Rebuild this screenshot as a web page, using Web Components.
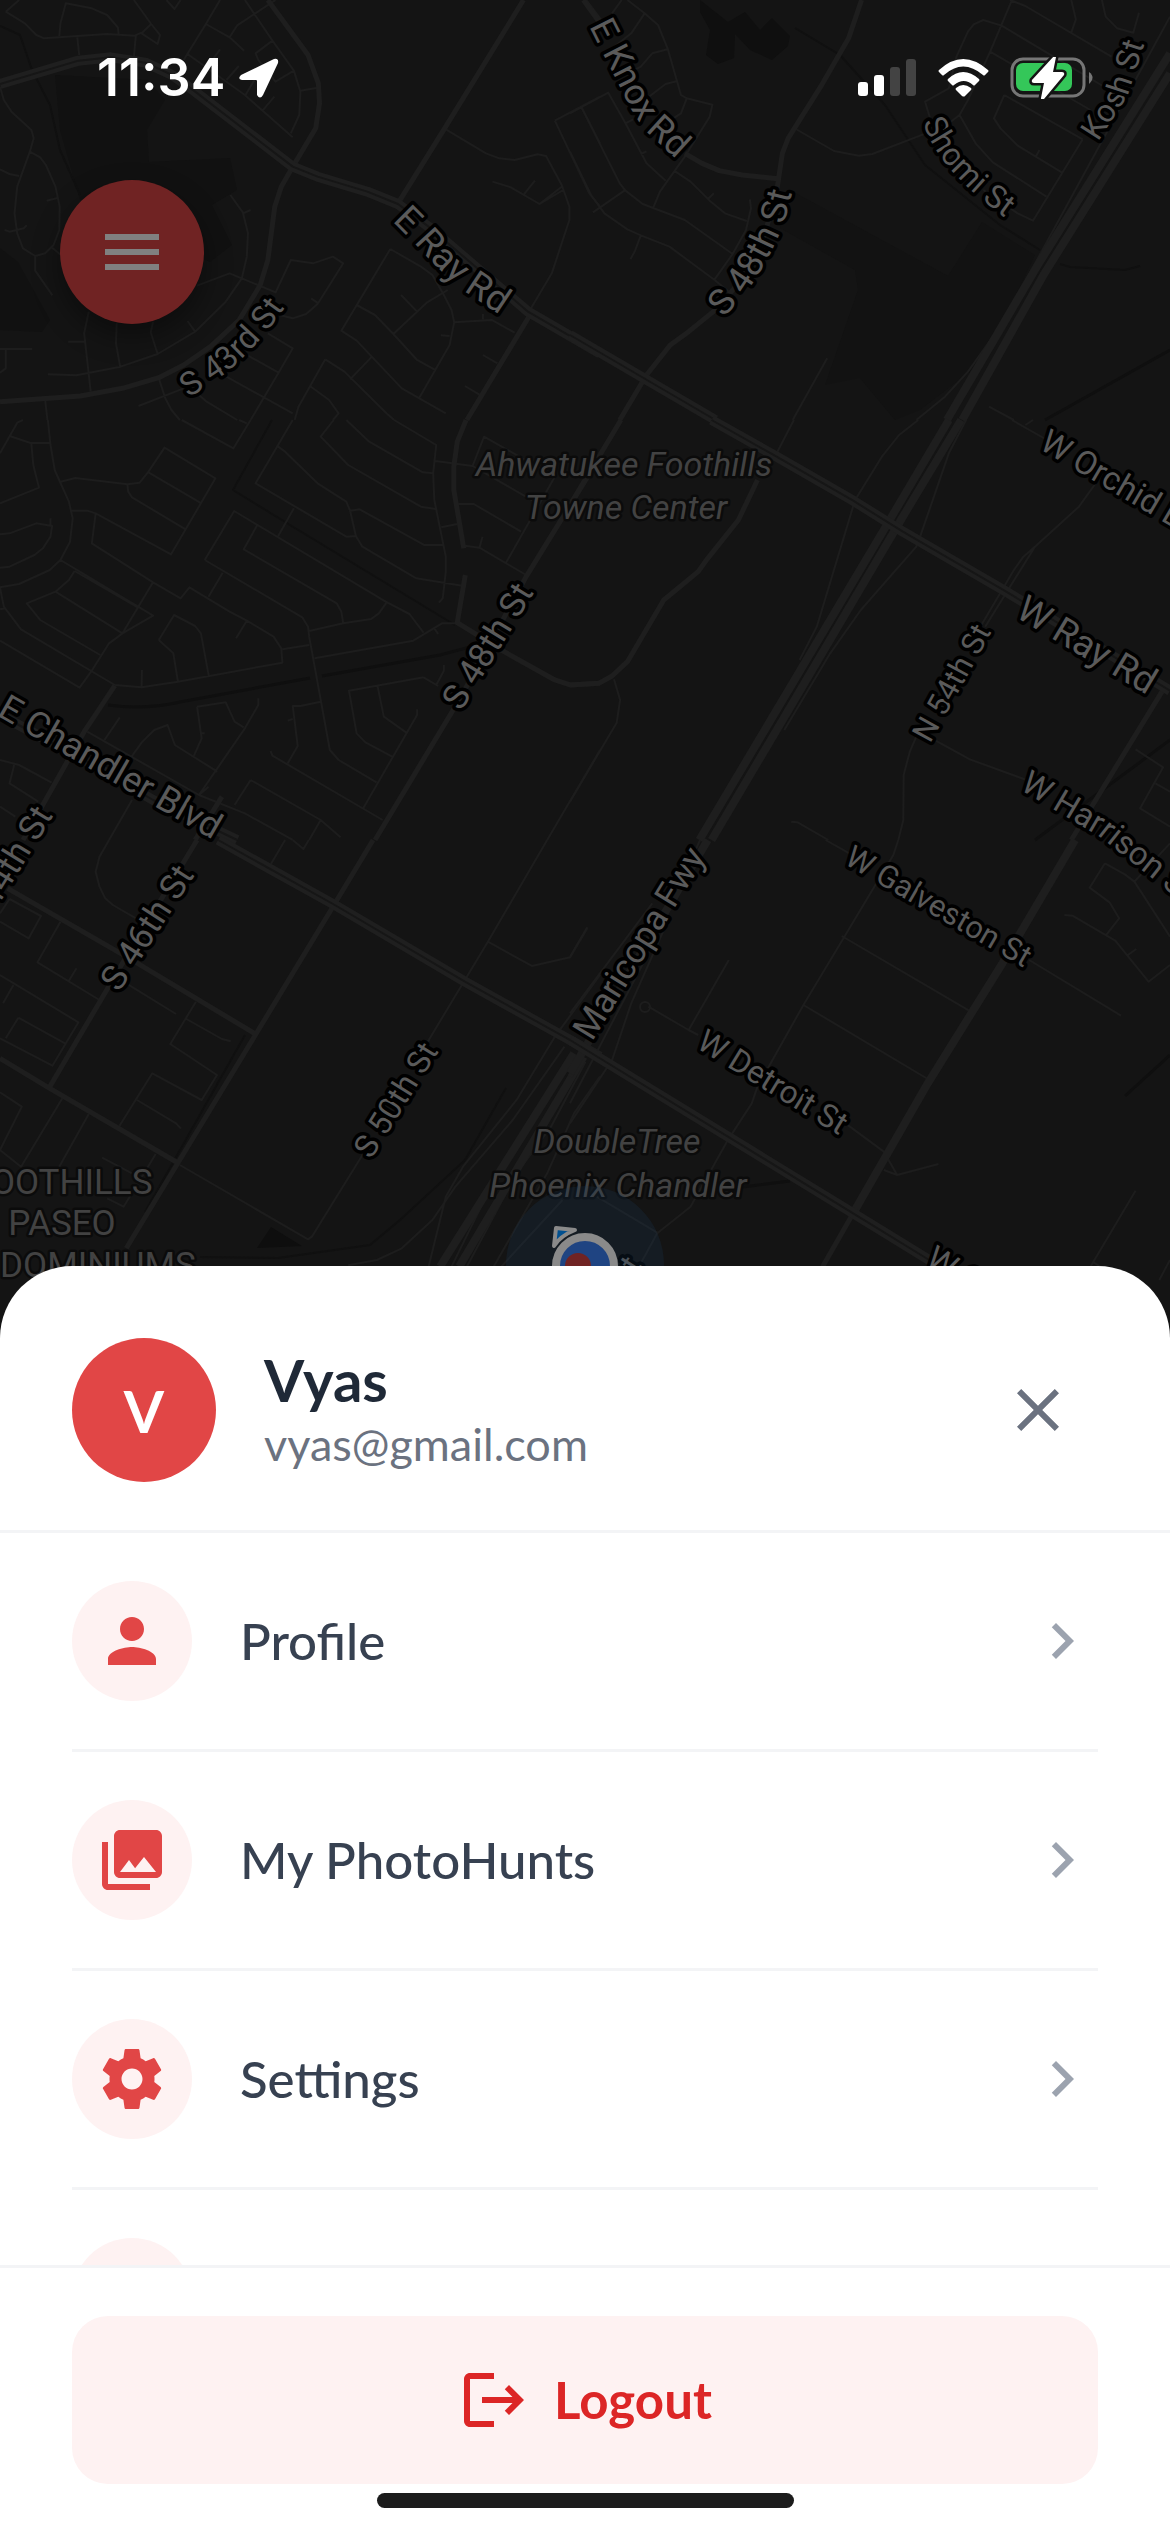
<!DOCTYPE html>
<html lang="en">
<head>
<meta charset="utf-8">
<meta name="viewport" content="width=device-width, initial-scale=1">
<title>PhotoHunts menu</title>
<style>
  html, body { margin: 0; height: 100%; }
  body { background: #141414; font-family: Lato, "Open Sans", sans-serif; -webkit-font-smoothing: antialiased; }
</style>
</head>
<body>
<app-screen>
  <street-map slot="map"></street-map>
  <status-bar slot="top" time="11:34"></status-bar>
  <menu-fab slot="top"></menu-fab>
  <menu-sheet slot="sheet">
    <user-header slot="header" initial="V">
      <span slot="name">Vyas</span>
      <span slot="email">vyas@gmail.com</span>
    </user-header>
    <menu-row icon="person">Profile</menu-row>
    <menu-row icon="photos">My PhotoHunts</menu-row>
    <menu-row icon="gear">Settings</menu-row>
    <menu-row icon="none"></menu-row>
    <logout-button slot="footer">Logout</logout-button>
  </menu-sheet>
</app-screen>

<script>
const define = (name, render) => customElements.define(name, class extends HTMLElement {
  connectedCallback() {
    if (this.shadowRoot) return;
    this.attachShadow({ mode: 'open' }).innerHTML = render(this);
  }
});

const ICONS = {
  none: '',
  person: 'M12 12c2.21 0 4-1.79 4-4s-1.79-4-4-4-4 1.79-4 4 1.79 4 4 4zm0 2c-2.67 0-8 1.34-8 4v2h16v-2c0-2.66-5.33-4-8-4z',
  photos: 'M22 16V4c0-1.1-.9-2-2-2H8c-1.1 0-2 .9-2 2v12c0 1.1.9 2 2 2h12c1.1 0 2-.9 2-2zm-11-4l2.03 2.71L16 11l4 5H8l3-4zM2 6v14c0 1.1.9 2 2 2h14v-2H4V6H2z',
  gear: 'M19.43 12.98c.04-.32.07-.64.07-.98s-.03-.66-.07-.98l2.11-1.65c.19-.15.24-.42.12-.64l-2-3.46c-.12-.22-.39-.3-.61-.22l-2.49 1c-.52-.4-1.08-.73-1.69-.98l-.38-2.65C14.46 2.18 14.25 2 14 2h-4c-.25 0-.46.18-.49.42l-.38 2.65c-.61.25-1.17.59-1.69.98l-2.49-1c-.23-.09-.49 0-.61.22l-2 3.46c-.13.22-.07.49.12.64l2.11 1.65c-.04.32-.07.65-.07.98s.03.66.07.98l-2.11 1.65c-.19.15-.24.42-.12.64l2 3.46c.12.22.39.3.61.22l2.49-1c.52.4 1.08.73 1.69.98l.38 2.65c.03.24.24.42.49.42h4c.25 0 .46-.18.49-.42l.38-2.65c.61-.25 1.17-.59 1.69-.98l2.49 1c.23.09.49 0 .61-.22l2-3.46c.12-.22.07-.49-.12-.64l-2.11-1.65zM12 15.5c-1.93 0-3.5-1.57-3.5-3.5s1.57-3.5 3.5-3.5 3.5 1.57 3.5 3.5-1.57 3.5-3.5 3.5z',
  close: 'M19 6.41L17.59 5 12 10.59 6.41 5 5 6.41 10.59 12 5 17.59 6.41 19 12 13.41 17.59 19 19 17.59 13.41 12z',
  chevron: 'M10 6L8.59 7.41 13.17 12l-4.58 4.59L10 18l6-6z',
  menu: 'M3 18h18v-2H3v2zm0-5h18v-2H3v2zm0-7v2h18V6H3z',
  logout: 'M17 7l-1.41 1.41L18.17 11H8v2h10.17l-2.58 2.58L17 17l5-5zM4 5h8V3H4c-1.1 0-2 .9-2 2v14c0 1.1.9 2 2 2h8v-2H4V5z'
};
const icon = name => `<svg viewBox="0 0 24 24" width="72" height="72" fill="currentColor" aria-hidden="true"><path d="${ICONS[name]}"/></svg>`;
const RESET = 'button{appearance:none;border:0;margin:0;padding:0;background:none;font:inherit;color:inherit;cursor:pointer}svg{display:block;flex:none}';

define('app-screen', () => `
<style>
  :host { display: grid; min-height: 100vh; grid-template: minmax(0, 1fr) / minmax(0, 1fr); overflow: hidden; }
  .map, .ui { grid-area: 1 / 1; }
  .map { display: grid; height: 100vh; }
  .ui { display: flex; flex-direction: column; justify-content: space-between; z-index: 1; }
</style>
<div class="map"><slot name="map"></slot></div>
<div class="ui"><div><slot name="top"></slot></div><slot name="sheet"></slot></div>`);

define('status-bar', el => `
<style>
  :host { display: flex; justify-content: space-between; align-items: center; height: 156px; padding: 0 76px 0 97px; color: #fff; }
  .left { display: flex; align-items: center; gap: 14px; font: 600 52px/60px Inter, sans-serif; }
  .right { display: flex; align-items: center; gap: 21px; }
  svg { display: block; }
</style>
<div class="left"><span>${el.getAttribute('time')}</span>
  <svg width="40" height="40" viewBox="0 0 40 40" fill="#fff"><path d="M2 17 35 1q5-1 4 4L24 37q-3 5-6 0V23q0-1-1-1H3q-5-1-1-5z"/></svg></div>
<div class="right">
  <svg width="59" height="38" viewBox="0 0 59 38" fill="#fff"><rect y="23" width="10" height="14" rx="3"/><rect x="16" y="16" width="10" height="21" rx="3"/><g fill="#434343"><rect x="32" y="8" width="10" height="29" rx="3"/><rect x="48" width="10" height="37" rx="3"/></g></svg>
  <svg width="51" height="38" viewBox="0 0 51 38" fill="#fff"><path d="M1 11Q25 -11 50 11q1 1 0 2l-3 3q-1 1-2 0Q25-1 6 16q-1 1-2 0l-3-3q-1-1 0-2z"/><path d="M10 20Q25 6 41 20q1 1 0 2l-4 4q-1 1-2 0-9-8-19 0-1 1-2 0l-4-4q-1-1 0-2z"/><path d="M18 29q7-6 15 0 1 1 0 2l-6 6q-1 1-3 0l-6-6q-1-1 0-2z"/></svg>
  <svg width="84" height="42" viewBox="0 0 84 42"><rect x="2" y="2" width="72" height="37" rx="11" fill="none" stroke="#767676" stroke-width="3"/><rect x="6" y="6" width="56" height="28" rx="7" fill="#34c759"/><path d="M79 15q7 5 0 12z" fill="#767676"/><path d="M44-1 22 23q-1 3 2 3h10l-3 15q0 3 3 1l20-24q1-3-2-3H43l3-15q0-2-2-1z" fill="#fff" stroke="#141414" stroke-width="5" paint-order="stroke"/></svg>
</div>`);

define('menu-fab', () => `
<style>${RESET}
  :host { display: block; padding: 24px 60px 0; }
  button { display: grid; place-items: center; width: 144px; height: 144px; border-radius: 50%; background: #702323; color: #808080; box-shadow: 0 12px 28px rgba(0,0,0,.4); }
</style><button aria-label="Open menu">${icon('menu')}</button>`);

define('menu-sheet', () => `
<style>
  :host { display: flex; flex-direction: column; height: 50vh; background: #fff; border-radius: 72px 72px 0 0; overflow: hidden; }
  .list { flex: 1; min-height: 0; overflow: hidden; padding: 0 72px; }
  .foot { border-top: 3px solid #f3f4f6; padding: 48px 72px 9px; background: #fff; }
  .home { width: 417px; height: 15px; border-radius: 8px; background: #1c1c1c; margin: 0 auto 24px; flex: none; }
</style>
<slot name="header"></slot>
<div class="list"><slot></slot></div>
<div class="foot"><slot name="footer"></slot></div>
<div class="home"></div>`);

define('user-header', el => `
<style>${RESET}
  :host { display: flex; align-items: center; gap: 48px; padding: 72px 72px 48px; border-bottom: 3px solid #f3f4f6; }
  .avatar { display: grid; place-items: center; width: 144px; height: 144px; border-radius: 50%; background: #e14646; color: #fff; font-size: 58px; font-weight: 700; }
  .who { flex: 1; display: flex; flex-direction: column; }
  .name { font-size: 58px; line-height: 68px; font-weight: 700; color: #1f2937; }
  .email { font-size: 45px; line-height: 60px; color: #6b7280; }
  button { padding: 24px; color: #6b7280; }
</style>
<div class="avatar">${el.getAttribute('initial')}</div>
<div class="who"><div class="name"><slot name="name"></slot></div><div class="email"><slot name="email"></slot></div></div>
<button aria-label="Close">${icon('close')}</button>`);

define('menu-row', el => `
<style>${RESET}
  :host { display: block; border-bottom: 3px solid #f3f4f6; }
  button { display: flex; align-items: center; gap: 48px; width: 100%; padding: 48px 0; text-align: left; font-size: 51px; line-height: 60px; font-weight: 500; color: #374151; }
  .disc { display: grid; place-items: center; width: 120px; height: 120px; border-radius: 50%; background: #fef2f2; color: #e14646; }
  .label { flex: 1; }
  .chev { color: #9ca3af; }
</style>
<button><span class="disc">${icon(el.getAttribute('icon'))}</span><span class="label"><slot></slot></span><span class="chev">${icon('chevron')}</span></button>`);

define('logout-button', () => `
<style>${RESET}
  :host { display: block; }
  button { display: flex; align-items: center; justify-content: center; gap: 24px; width: 100%; height: 168px; border-radius: 36px; background: #fef2f2; color: #dc2626; font-size: 51px; line-height: 60px; font-weight: 700; }
</style><button>${icon('logout')}<span><slot></slot></span></button>`);

/* Map tiles: each holds streets in tile units, [x, y, minor, major, artery, freeway]. */
const TILES = [
  [0, 0,
   `M350 0 395 72 418 105 412 132 370 100 395 72M15 35 50 0M15 35 65 70 95 105 115 115 280 102 352 107 370 98M155 108 158 70 172 10 240 25 280 45 308 82 310 102M202 112 207 165M355 107 350 170M435 0 456 27 472 0M575 0 538 72 480 180M538 72 600 112 638 152M600 112 620 76 720 0M640 0 712 122 768 212 785 275 782 345 760 400M712 122 668 160 675 180 720 245 768 212M785 272 830 263M490 162 640 285 765 412M575 148 556 178M624 198 592 240M665 240 640 288M717 290 686 332M0 260 10 300 30 335 82 390 88 415 78 455 45 560 38 640 45 700 60 745 92 768 118 760 140 735 155 690 156 620 145 560 120 495 105 472 78 455M0 508 25 522 50 528M150 594 122 602M12 690 25 695 62 685 70 676M92 768 92 812 137 886M135 742 170 775M602 585 635 638 648 700 645 770 632 835 590 905 510 995 412 1062 315 1100 200 1126 125 1123M635 640 655 630M515 857 600 820 722 878M232 935 220 1000 237 1175M305 970 303 1030 314 1100M400 965 394 997 412 1062M490 963 510 995M178 1025 220 1025M0 1047 84 1047M15 1047 15 1105 0 1118M118 1200 124 1260M720 878 760 780 818 790 870 770 897 790 830 912 800 942 765 955 730 945M832 910 813 895M700 1000 765 1045 728 1118 655 1260M728 1118 630 1055M765 1240 560 1110M415 1135 432 1195 448 1230 470 1260M362 1218 480 1165M520 1185 540 1205 620 1260M1165 388 1270 460 1305 475 1345 480 1405 463 1427 468 1468 555 1488 620 1488 660 1442 820 1385 930M1287 545 1335 562 1410 612 1468 560M1370 582 1398 542M1410 612 1472 570M1450 362 1568 290M1450 362 1540 580 1568 620M1520 322 1568 430M1020 747 892 992 932 1022 1050 1165 1165 1240M1020 747 1100 800 1130 825 1160 885 1180 930 1187 967 1175 1035 1095 1195M1187 967 1285 960 1345 998M932 915 980 945 1028 1002 1090 1080 1137 1110M1028 1002 1115 908 1170 870M1048 885 1090 935M1262 942 1262 958M1175 1008 1152 1006M1262 1065 1300 1090M1215 1158 1253 1184M850 1078 780 1220 770 1260M850 1078 900 1115 1010 1240 1030 1260M970 1072 915 1138M810 1158 860 1200 885 1240 870 1260`,
   `M700 0 805 165 832 250 835 310 825 385 765 500 735 560 718 620 700 780 680 855 625 960 550 1040 480 1095 415 1133 320 1165 210 1188 0 1205M1368 0 1162 385 1040 610M1527 0 1568 62M1385 945 1220 1260`,
   `M0 252 205 182 290 172 380 188 450 225 510 275 765 500 830 530 960 575 1040 612 1120 680 1380 935 1568 1060`, ''],
  [570, 0,
   `M110 40 135 0M150 0 195 40 230 75 255 145 290 285 305 295 372 314 365 350 300 470 235 575 218 622M195 40 160 100 105 150M255 148 215 160 185 200 160 215M278 244 250 252 195 300M305 295 290 340 250 370M0 340 100 278 145 370 200 490 250 542M145 370 165 358M185 462 200 454M30 322 130 550 145 572 190 612 300 660 425 762M0 455 55 585 90 640 150 688 185 706 260 740 378 840 420 880M60 637 142 572M185 706 170 752 158 778M272 512 315 545 365 602 405 640 462 663M360 598 376 580M470 598 473 625 460 690 425 762 378 838M590 387 690 453 755 467 790 462 930 400 945 370 928 305 990 265 1010 170 1040 95 1055 73 1080 60 1128 77 1410 270M1155 0 1098 155 1040 300 1018 345 990 370 945 390M1150 0 1190 18 1415 170M1310 0 1322 58 1310 98M1390 0 1400 50 1430 85 1472 98 1487 38M1098 155 1360 330M1135 285 1340 418M1135 285 1108 355 1125 385 1170 437 1285 517M1218 468 1227 450M1018 345 1060 430 1105 487 1245 590M1340 418 1210 662 1170 640 1080 570M672 1075 582 1260M1095 1220 1160 1260M1568 50 1130 970 1040 1115 980 1190 905 1260`,
   `M35 0 85 80M762 0 728 115 655 260 570 415 555 460 542 560 510 700 440 850 385 925 310 995 262 1035 200 1125 130 1260M300 460 345 490 390 512 450 525 542 536`,
   `M0 1005 380 1260`, `M1568 160 1220 800 985 1260M1568 220 1240 820 1025 1260`],
  [0, 420,
   `M60 0 45 8 0 100M25 48 80 69 130 69M125 0 132 75 143 150 180 245 190 295 183 365 158 420 130 450 50 492 0 502M82 72 87 135 102 203 0 250M0 343 25 340 95 310 136 318 132 350 112 385 90 405 25 440 0 443M132 318 132 295M158 185 197 174 333 193 365 188 388 155 430 83 563 175 447 403 250 280 228 272 188 272M388 157 523 248M333 193 335 215 345 232 485 328M250 280 240 370 400 487 472 535 495 502 600 575 645 602 715 650 735 685 738 728 465 785 370 802 300 795M158 420 400 587 320 640 285 670 238 755 208 803 0 662M400 487 320 640 145 515 70 550 105 600 262 705M195 453 180 480 145 515M195 453 360 562M0 502 10 560 55 628 300 795M0 568 15 565M370 802 371 750M535 420 612 273 1008 545 1070 582 1107 638M535 420 790 592 805 620 808 650 862 990 885 1020 984 1087M582 458 545 530M672 316 637 388 880 550 892 575 897 610 970 597 990 580 1010 548M645 602 617 655M738 688 808 675M808 633 897 610M822 715 1080 662 1155 610 1195 610M1135 625 1145 642M415 660 455 585 510 618 525 640 546 770M415 660 453 700 465 785M475 0 610 85 655 0M625 0 645 10M765 0 668 190 905 350 930 348 915 272 905 245 830 190 745 95 727 80M768 265 727 348M930 348 947 380 1088 475 1208 497M915 272 940 268 1108 375 1158 375M872 0 838 50 910 135 1100 260 1138 267M905 0 965 65 1105 157 1132 160M1030 0 1140 75 1132 160 1135 240 1165 410 1165 455 1157 535 1147 548M1138 123 1235 138 1265 50 1450 170 1323 427M1235 138 1405 250M1198 252 1238 252 1362 335M1153 322 1195 312M1215 377 1253 383 1375 465M1253 383 1261 350M228 935 520 1125 640 925 675 855 675 835M273 960 313 892M345 1008 370 968 403 930 438 915 457 975 568 1055M515 860 527 955 507 1007M515 860 590 847 613 905 637 922M527 940 535 940M838 845 785 858 765 858 778 978 752 1030M765 897 752 902M707 993 712 1007 1000 1200M1107 772 912 812 932 940 955 967 1025 1010M1107 772 1145 798M1140 795 1160 752 1160 735M987 800 1003 890 1062 938M950 1163 1090 885 1090 868M0 1020 50 1035 135 1088M37 1035 25 1090 100 1145M520 1125 640 1180 765 1260M545 1100 520 1125M655 1080 613 1155M655 1080 838 1200 890 1252M838 1200 808 1260M345 1140 285 1260M1568 990 1430 1260M0 1160 40 1190`,
   `M1218 0 1195 65 1186 140 1186 210 1212 385M1216 465 1195 608 1310 690 1450 780 1490 795 1568 790M1568 110 1375 470 1205 830 980 1260M300 797 220 935 60 1260M580 1130 510 1260`,
   `M0 885 220 1020 400 1140 620 1260`, ''],
  [570, 420,
   `M585 0 540 100M910 0 860 45 815 110 745 240 645 620 600 720M1035 0 990 100 915 350 905 380 760 570 680 700 560 930M1155 0 1270 75M1210 0 1190 15M1380 180 1330 260 1215 380 1185 410 1160 450 1075 615M1215 380 1085 620M905 950 888 995 872 1065 871 1200 858 1260M945 955 1045 1018 1200 1083M115 778 131 840 122 908 0 1145M578 1205 595 1207 675 1260M1478 988 1550 1042 1490 1165 1568 1220M1530 1090 1568 1115`,
   `M133 0 5 245M490 180 440 300 360 415 335 455 245 540 150 725 110 768 75 790 0 795M1555 800 1310 1260`,
   `M370 0 540 110 740 242 870 335 1140 515 1568 812`, `M990 0 820 330 338 1260M1022 0 870 290 370 1260`],
  [0, 840,
   `M25 177 107 228 75 295 0 245M25 177 0 220M158 245 98 367 260 480M180 422 200 385M0 405 205 547 137 677 0 595M35 435 8 490M48 533 15 595M48 533 170 610M285 0 260 50 250 95 260 140 275 175 295 195 370 245M330 430 460 522M512 485 445 612 567 705 527 780 398 700 312 858M487 537 580 597 603 604M358 780 460 850 473 866M0 757 57 800 0 930M163 775 55 980 0 930M232 822 150 990M407 942 323 1100 280 1075M267 953 345 1000M470 975 805 1198 815 1190 950 940M1430 0 1275 305 1110 620M1275 305 1390 378 1490 352 1535 265M765 0 793 27 807 0M745 0 708 72M1568 405 1450 590 1350 780 1210 980 1165 1070 1120 1280M1475 620 1340 840 1190 1040 1130 1140 1050 1225 985 1260 910 1276M1495 640 1400 830 1300 1000 1180 1280M1530 665 1440 860 1350 1000 1220 1280M1568 710 1500 820 1430 1000 1290 1280M1470 1080 1310 1280`,
   `M20 145 330 350 665 580M0 655 130 745 470 972M130 740 320 370 515 0M975 0 870 200 670 580 330 1225`,
   `M570 0 875 195 1215 425 1568 650`, `M1500 640 1150 1280M1525 650 1200 1280`],
  [570, 840,
   `M668 0 730 40M858 0 845 45 610 495 490 740 475 790 410 905 315 1100 228 1180 180 1280M710 288 1043 512M610 495 935 717M1200 360 1440 527M415 360 310 570M205 500 310 570 335 585M720 850 820 935 855 1005 963 972M820 990 855 1005M45 262 0 350M215 190 0 520M245 270 160 490 110 660 0 850M340 0 200 350 0 790M1398 70 1358 143 1410 187 1435 235 1400 287M1398 70 1450 103 1475 125 1568 290M1475 125 1568 10M1292 225 1313 227 1425 302 1512 425 1568 375M1458 345 1480 327M1478 1052 1360 1280M70 1070 228 1178M1365 1265 1400 1290M1568 1260 1540 1320`,
   `M740 1120 660 1280M30 640 0 710`,
   `M0 600 420 895 740 1120 960 1275`, `M360 0 0 700M1320 0 1130 370 935 730 740 1120`]
];

/* Street labels: [path, name, type size] */
const STREETS = [
  ['M589 26 604 56 630 107Q640 125 652 137L710 190', 'E Knox Rd', 36],
  ['M392 221 417 246Q440 272 467 293L530 335', 'E Ray Rd', 37],
  ['M189 398 222 376Q262 345 300 285', 'S 43rd St', 33],
  ['M724 318 748 290Q774 252 786 217L800 160', 'S 48th St', 36],
  ['M923 122Q942 184 1050 246', 'Shomi St', 32],
  ['M1098 142 1128 95 1152 20', 'Kosh St', 32],
  ['M1038 448 1238 566', 'W Orchid Ln', 33],
  ['M1014 616 1214 735', 'W Ray Rd', 37],
  ['M930 744 1030 562', 'N 54th St', 31],
  ['M1019 789 1100 837 1230 940', 'W Harrison St', 33],
  ['M843 863 1100 1012', 'W Galveston St', 31],
  ['M695 1047 900 1173', 'W Detroit St', 32],
  ['M592 1042 728 822', 'Maricopa Fwy', 35],
  ['M461 712 570 534', 'S 48th St', 35],
  ['M-4 715 260 867', 'E Chandler Blvd', 36],
  ['M-20 935 106 730', 'S 44th St', 35],
  ['M119 993 230 820', 'S 46th St', 35],
  ['M371 1160 472 998', 'S 50th St', 32],
  ['M924 1264 1100 1372', 'W C', 33],
  ['M637 1274 690 1190', 't', 32]
];

define('street-map', () => `
<style>
  :host { display: block; min-height: 0; }
  svg { display: block; width: 100%; height: 100%; }
  path { fill: none; stroke-linejoin: round; }
  .minor { stroke: #1d1d1d; stroke-width: 2; }
  .major { stroke: #1e1e1e; stroke-width: 5; }
  .artery { stroke: #1f1f1f; stroke-width: 10; }
  .median { stroke: #161616; stroke-width: 2; }
  .freeway { stroke: #1e1e1e; stroke-width: 8; }
  .minor, .major, .artery, .median, .freeway { vector-effect: non-scaling-stroke; }
  text { font-family: Roboto, sans-serif; paint-order: stroke; stroke: #000; stroke-width: 7px; stroke-linejoin: round; }
  .street { fill: #5a5a5a; }
  .poi { font-size: 34px; fill: #424242; text-anchor: middle; stroke: #0b0b0b; stroke-width: 5px; }
  .it { font-style: italic; }
  .caps { font-size: 35px; }
</style>
<svg viewBox="0 0 1170 2532" preserveAspectRatio="xMidYMin slice" role="img" aria-label="Map">
  <rect width="1170" height="2532" fill="#141414"/>
  <path style="fill:#111" d="M55 75 148 80 165 100 147 130 149 162 230 158 237 190 212 205 232 245 210 262 80 200 60 130z"/>
  <path style="fill:#111" d="M0 248 18 262 50 320 42 332 0 330z"/>
  <path style="fill:#0f0f0f" d="M700 0 728 22 745 12 760 30 772 18 790 36 788 46 772 60 750 50 735 34 734 58 718 64 706 55 710 30 700 12z"/>
  <path style="fill:#121212" d="M790 190 948 276 982 222 1035 255 985 360 920 410 895 420 860 378 825 385 858 290 855 270 780 228z"/>
  <path style="fill:#0e0e0e" d="M271 1227 302 1246 257 1248z"/>
  <path d="M108 705Q145 710 180 702L310 678M322 676 440 655 470 647M1035 840 1170 740M1125 1096 1170 1055M735 1188 790 1181M1045 420 1170 350" style="stroke:#0f0f0f;stroke-width:3"/>
  <path d="M272 420 233 490 290 525 455 625M0 26 20 35 32 70 50 105 60 150 80 195M795 28 840 55 885 105 925 165 1000 225 1040 250M506 1088 465 1160 400 1220 370 1245 278 1258 200 1257M245 1035 145 1212M1060 264 1070 267 1125 270 1140 266" style="stroke:#101010;stroke-width:2"/>
  ${TILES.map(([x, y, minor, major, artery, freeway]) => `<g transform="translate(${x} ${y}) scale(.38265 .33333)"><path class="minor" d="${minor}"/><path class="major" d="${major}"/><path class="freeway" d="${freeway}"/><path class="artery" d="${artery}"/><path class="median" d="${artery}"/></g>`).join('')}
  <circle cx="645" cy="1007" r="5" fill="none" stroke="#1d1d1d" stroke-width="2"/>
  <defs>${STREETS.map(([d], i) => `<path id="s${i}" d="${d}"/>`).join('')}</defs>
  ${STREETS.map(([, t, size], i) => `<text class="street" font-size="${size}"><textPath href="#s${i}">${t}</textPath></text>`).join('')}
  <text class="poi it" x="624" y="476">Ahwatukee Foothills</text>
  <text class="poi it" x="626" y="519">Towne Center</text>
  <text class="poi it" x="617" y="1153">DoubleTree</text>
  <text class="poi it" x="618" y="1197">Phoenix Chandler</text>
  <text class="poi caps" x="62" y="1194">FOOTHILLS</text>
  <text class="poi caps" x="62" y="1235">PASEO</text>
  <text class="poi caps" x="62" y="1277">CONDOMINIUMS</text>
  <circle cx="585" cy="1265" r="79" fill="#1c3a5c" fill-opacity=".22"/>
  <path d="M556 1228 575 1230Q560 1236 554 1246z" style="fill:#004f8f;stroke:#8a8a8a;stroke-width:4"/>
  <circle cx="585" cy="1266" r="29" fill="#1f4482" stroke="#8a8a8a" stroke-width="8"/>
  <circle cx="578" cy="1266" r="13" fill="#702323"/>
</svg>`);
</script>
</body>
</html>
